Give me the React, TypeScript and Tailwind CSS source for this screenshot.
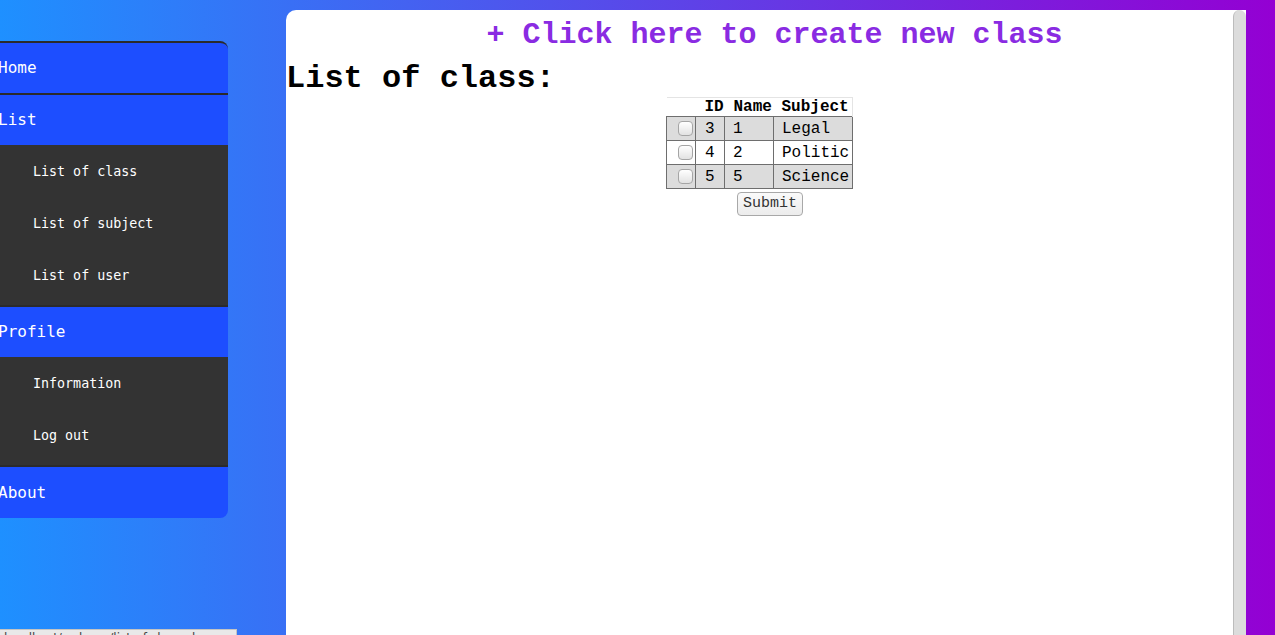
const listItems = ['List of class', 'List of subject', 'List of user']
const profileItems = ['Information', 'Log out']

const rows = [
  { id: 3, name: '1', subject: 'Legal' },
  { id: 4, name: '2', subject: 'Politic' },
  { id: 5, name: '5', subject: 'Science' },
]

function SubMenu({ items }: { items: string[] }) {
  return (
    <div className="bg-[#333333] pt-[1px] pb-[3px]">
      {items.map((item) => (
        <div key={item} className="flex h-[52px] items-center pl-[33px] text-[13.33px]">
          {item}
        </div>
      ))}
    </div>
  )
}

function Sidebar() {
  return (
    <nav className="mt-[41px] w-[228px] shrink-0 self-start overflow-hidden rounded-tr-[8px] rounded-br-[8px] border-t-2 border-[#2b2b2b] bg-[#1d4eff] font-['DejaVu_Sans_Mono',monospace] text-white">
      <div className="flex h-[52px] items-center border-b-2 border-[#2b2b2b] text-[16px]">
        <span className="-ml-[2px]">Home</span>
      </div>
      <div className="flex h-[50px] items-center text-[16px]">
        <span className="-ml-[2px]">List</span>
      </div>
      <SubMenu items={listItems} />
      <div className="flex h-[52px] items-center border-t-2 border-[#2b2b2b] text-[16px]">
        <span className="-ml-[2px]">Profile</span>
      </div>
      <SubMenu items={profileItems} />
      <div className="flex h-[53px] items-center border-t-2 border-[#2b2b2b] text-[16px]">
        <span className="-ml-[2px]">About</span>
      </div>
    </nav>
  )
}

function ClassTable() {
  return (
    <table className="mx-auto border-collapse text-[16px] text-black">
      <thead>
        <tr className="h-[19px] bg-white leading-[18px]">
          <th className="w-[29px] border-t border-[#e4e4e4] p-0" />
          <th className="w-[29px] border-t border-[#e4e4e4] p-0 pl-[9px] text-left font-bold">ID</th>
          <th className="w-[49px] border-t border-[#e4e4e4] p-0 pl-[9px] text-left font-bold">Name</th>
          <th className="w-[79px] border-t border-r border-[#e4e4e4] p-0 pl-[8px] text-left font-bold">Subject</th>
        </tr>
      </thead>
      <tbody>
        {rows.map((row, i) => (
          <tr key={row.id} className={`h-[24px] leading-[18px] ${i % 2 === 0 ? 'bg-[#dcdcdc]' : 'bg-white'}`}>
            <td className="border border-[#6e6e6e] p-0 pl-[11px] text-left">
              <input
                type="checkbox"
                className="m-0 block h-[15px] w-[15px] appearance-none rounded-[4px] border border-[#a5a5a5] bg-[linear-gradient(#ffffff,#e2e2e2)]"
              />
            </td>
            <td className="border border-[#6e6e6e] p-0 pl-[9px]">{row.id}</td>
            <td className="border border-[#6e6e6e] p-0 pl-[8px]">{row.name}</td>
            <td className="border border-[#6e6e6e] p-0 pl-[8px]">{row.subject}</td>
          </tr>
        ))}
      </tbody>
    </table>
  )
}

export default function App() {
  return (
    <div className="relative flex h-[635px] w-full overflow-hidden bg-[linear-gradient(to_right,#1e90ff,#9400d3)]">
      <Sidebar />
      <main className="mt-[10px] ml-[58px] flex w-[960px] shrink-0 overflow-hidden rounded-tl-[10px] bg-white font-['Liberation_Mono',monospace]">
        <div className="flex-1">
          <a className="block pt-[8px] pl-[30px] text-center text-[30px] leading-[34px] font-bold text-[#8a2be2]">
            + Click here to create new class
          </a>
          <h1 className="mt-[9px] text-[32px] leading-[36px] font-bold text-black">List of class:</h1>
          <ClassTable />
          <div className="flex justify-center pl-[21px]">
            <button className="mt-[3px] h-[24px] w-[66px] rounded-[4px] border border-[#a8a8a8] bg-[linear-gradient(#fafafa,#ececec)] text-[15px] leading-[20px] text-[#333]">
              Submit
            </button>
          </div>
        </div>
        <div className="w-[13px] shrink-0 rounded-t-[7px] border-l border-[#bcbcbc] bg-[#dcdcdc]" />
      </main>
      <div className="absolute bottom-0 left-0 h-[6px] w-[237px] overflow-hidden border-t border-r border-[#c4c4c4] bg-[#e9e9e9] pl-[4px] font-['DejaVu_Sans',sans-serif] text-[12px] leading-[16px] text-[#444]">
        localhost/webapp/list-of-class.php
      </div>
    </div>
  )
}
